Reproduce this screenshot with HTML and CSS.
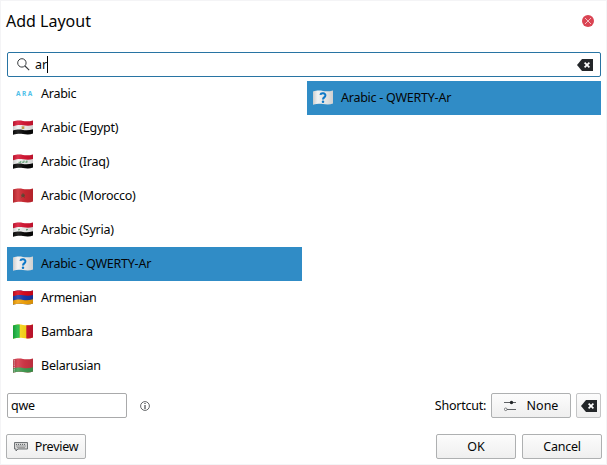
FILE: index.html
```html
<!DOCTYPE html>
<html lang="en">
<head>
<meta charset="utf-8">
<title>Add Layout</title>
<link rel="stylesheet" href="styles.css">
</head>
<body>
<svg class="defs" width="0" height="0">
  <defs>
    <clipPath id="wave"><path d="M0 1.6C4 .3 7 .5 10 1S17 1.4 20 .4V13.6C17 14.8 13 14.6 10 14S4 13.6 0 14.8Z"/></clipPath>
    <linearGradient id="shade"><stop offset="0" stop-color="#000" stop-opacity=".16"/><stop offset=".25" stop-color="#fff" stop-opacity=".12"/><stop offset=".65" stop-color="#000" stop-opacity=".06"/><stop offset="1" stop-color="#000" stop-opacity=".14"/></linearGradient>
    <g id="gloss"><rect width="20" height="15" fill="url(#shade)"/></g>
    <path id="s1" d="M0 0H20V5C17 6 13 5.8 10 5.3S4 5 0 6.2Z"/>
    <path id="s3" d="M0 10.6C4 9.3 7 9.5 10 10S17 10.3 20 9.3V15H0Z"/>
    <symbol id="unknown" viewBox="0 0 20 16"><g clip-path="url(#wave)"><rect width="20" height="16" fill="#f1f2f2"/><use href="#gloss"/></g><path d="M7.4 4.9C7.8 2.6 12.7 2.8 12.4 5.6C12.2 7.4 10 7.4 10 9.4" fill="none" stroke="#0c78c8" stroke-width="2"/><circle cx="10" cy="11.8" r="1.25" fill="#0c78c8"/></symbol>
    <symbol id="erase" viewBox="0 0 16 12"><path d="M0 6L5 0H16V12H5Z" fill="#232629"/><path d="M7.6 3.6L12.4 8.4M12.4 3.6L7.6 8.4" stroke="#fff" stroke-width="1.7"/></symbol>
  </defs>
</svg>
<main class="window">
  <header class="titlebar">
    <h1>Add Layout</h1>
    <svg class="close" viewBox="0 0 12 12"><circle cx="6" cy="6" r="6" fill="#da4453"/><path d="M3 3L9 9M9 3L3 9" stroke="#fbdde0" stroke-width=".8"/></svg>
  </header>
  <div class="search">
    <svg class="glass" viewBox="0 0 13 13"><circle cx="4.9" cy="4.9" r="4.2" fill="none" stroke="#34383b"/><path d="M8 8L12.2 12.2" stroke="#34383b" stroke-width="1.1"/></svg>
    <span>ar</span><i class="caret"></i>
    <svg class="erase"><use href="#erase"/></svg>
  </div>
  <section class="lists">
    <ul class="languages">
      <li><span class="code">ARA</span>Arabic</li>
      <li><svg class="flag" viewBox="0 0 20 16"><g clip-path="url(#wave)"><rect width="20" height="16" fill="#f3f3f3"/><use href="#s1" fill="#d91634"/><use href="#s3" fill="#080808"/><path d="M8.7 6L10 6.5L11.3 6V9H8.7Z" fill="#c9a44e"/><use href="#gloss"/></g></svg>Arabic (Egypt)</li>
      <li><svg class="flag" viewBox="0 0 20 16"><g clip-path="url(#wave)"><rect width="20" height="16" fill="#f3f3f3"/><use href="#s1" fill="#d91634"/><use href="#s3" fill="#080808"/><path d="M5.5 8.3H8M7.8 7V8.5M9 8.2H11M11 6.5V8.4M12.3 8.1H14.3M13.9 6.5V8.3" stroke="#479a62" stroke-width=".9"/><use href="#gloss"/></g></svg>Arabic (Iraq)</li>
      <li><svg class="flag" viewBox="0 0 20 16"><g clip-path="url(#wave)"><rect width="20" height="16" fill="#cf2932"/><path d="M10 5.3L11.4 9.4L8 6.9H12L8.6 9.4Z" fill="#6b3d2d" stroke="#534a32" stroke-width=".5"/><use href="#gloss"/></g></svg>Arabic (Morocco)</li>
      <li><svg class="flag" viewBox="0 0 20 16"><g clip-path="url(#wave)"><rect width="20" height="16" fill="#f3f3f3"/><use href="#s1" fill="#d91634"/><use href="#s3" fill="#080808"/><path d="M6 6.4L6.9 9L4.7 7.4H7.3L5.1 9ZM14 6.4L14.9 9L12.7 7.4H15.3L13.1 9Z" fill="#137b3d"/><use href="#gloss"/></g></svg>Arabic (Syria)</li>
      <li class="selected"><svg class="flag"><use href="#unknown"/></svg>Arabic - QWERTY-Ar</li>
      <li><svg class="flag" viewBox="0 0 20 16"><g clip-path="url(#wave)"><rect width="20" height="16" fill="#173bb0"/><use href="#s1" fill="#de071d"/><use href="#s3" fill="#f7a509"/><use href="#gloss"/></g></svg>Armenian</li>
      <li><svg class="flag" viewBox="0 0 20 16"><g clip-path="url(#wave)"><rect width="20" height="16" fill="#ffda19"/><path d="M0 0H6.7V16H0Z" fill="#18b83d"/><path d="M13.3 0H20V16H13.3Z" fill="#d31631"/><use href="#gloss"/></g></svg>Bambara</li>
      <li><svg class="flag" viewBox="0 0 20 16"><g clip-path="url(#wave)"><rect width="20" height="16" fill="#d53647"/><use href="#s3" fill="#429e52"/><path d="M1.2 0V16" stroke="#f2dfe1" stroke-width="1.1" stroke-dasharray="1 .8"/><use href="#gloss"/></g></svg>Belarusian</li>
    </ul>
    <ul class="variants"><li class="selected"><svg class="flag"><use href="#unknown"/></svg>Arabic - QWERTY-Ar</li></ul>
  </section>
  <section class="options">
    <div class="label-input">qwe</div>
    <svg class="info" viewBox="0 0 10 10"><circle cx="5" cy="5" r="4.4" fill="none" stroke="#3c4043" stroke-width=".8"/><path d="M5 2V3M5 4V8" stroke="#232629"/></svg>
    <span class="shortcut">Shortcut:</span>
    <div class="button">
      <svg class="sliders" viewBox="0 0 12 12"><path d="M0 2.5H12M3 9.5H12" stroke="#4d5053" stroke-width=".9"/><circle cx="7.5" cy="2.5" r="1.7" fill="#232629"/><circle cx="1.7" cy="9.3" r="1.3" fill="#fff" stroke="#4d5053" stroke-width=".7"/></svg><span class="wide">None</span>
    </div>
    <div class="button square"><svg class="erase"><use href="#erase"/></svg></div>
  </section>
  <footer class="actions">
    <div class="button preview"><svg class="keyboard" viewBox="0 0 14 11"><path d="M.5 1.5H13.5V8H4L2 10V8H.5Z" fill="#d6d6d6" stroke="#63676a" stroke-width=".9"/><path d="M2 3.4H12M2.5 5H12" stroke="#595d60" stroke-dasharray="1 1"/><path d="M3 6.7H11" stroke="#777" stroke-width=".7"/></svg>Preview</div>
    <div class="button ok wide">OK</div>
    <div class="button">Cancel</div>
  </footer>
</main>
</body>
</html>
```
FILE: styles.css
```css
* { box-sizing: border-box; }
body { margin: 0; background: #fff; color: #050606; font: 12.5px/18px "Noto Sans", sans-serif; letter-spacing: -.25px; }
.defs { position: absolute; }
.window { width: 607px; height: 465px; display: flex; flex-direction: column; border: 1px solid #f4f4f6; padding: 0 5px; }
.titlebar { height: 51px; display: flex; align-items: flex-start; justify-content: space-between; padding: 8px 7px 0 0; }
h1 { margin: 0; font-size: 16px; line-height: 24px; font-weight: 400; letter-spacing: 0; }
.close { width: 12px; height: 12px; margin-top: 6px; }
.search { height: 25px; width: 594px; margin-left: 1px; flex: none; display: flex; align-items: center; border: 1px solid #2874a3; border-radius: 2px; padding: 0 7px 0 9px; letter-spacing: 0; }
.glass { width: 13px; height: 13px; margin-right: 5px; }
.caret { width: 1px; height: 17px; background: #000; }
.erase { width: 16px; height: 12px; flex: none; }
.search .erase { margin-left: auto; }
.lists { display: flex; gap: 5px; height: 316px; margin-left: 1px; }
ul { list-style: none; margin: 0; padding: 0; width: 294px; }
.languages { width: 295px; }
.variants { padding-top: 4px; }
li { height: 34px; display: flex; align-items: center; padding: 0 0 1px 6px; white-space: pre; }
.selected { background: #308cc6; }
.flag { width: 20px; height: 16px; margin: 1px 8px 0 0; }
.code { width: 28px; padding-left: 3px; color: #4fc1e9; font: 700 6.5px/10px "Noto Sans", sans-serif; letter-spacing: 1.5px; }
.options { height: 25px; display: flex; align-items: center; margin-left: 1px; }
.label-input { width: 120px; height: 25px; border: 1px solid #a9aaab; border-radius: 2px; padding: 3px; }
.info { width: 10px; height: 10px; margin-left: 13px; }
.shortcut { margin-left: auto; margin-right: 5px; }
.button { width: 80px; height: 25px; display: flex; align-items: center; justify-content: center; border: 1px solid #aeb0b1; border-radius: 2px; background: linear-gradient(#fcfcfc, #efefef); }
.wide { letter-spacing: 0; }
.sliders { width: 12px; height: 12px; margin-right: 11px; }
.square { width: 25px; margin-left: 5px; border-color: #c4c5c6; }
.actions { display: flex; margin: 16px -1px 0 0; gap: 6px; }
.ok { margin-left: auto; }
.keyboard { width: 14px; height: 11px; margin-right: 7px; }
```
